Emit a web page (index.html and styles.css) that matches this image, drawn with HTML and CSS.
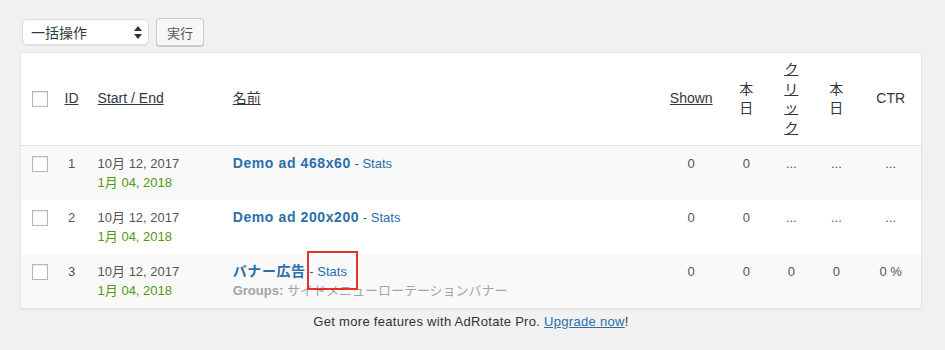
FILE: index.html
```html
<!DOCTYPE html>
<html>
<head>
    <link rel="stylesheet" href="styles.css">
</head>
<body>
    <div class="wrap">
        <div class="tablenav">
            <div class="bulk-select">
                <span>一括操作</span>
                <svg class="updown" width="8" height="13" viewBox="0 0 8 13"><path d="M4 0 L8 5 L0 5 Z M0 8 L8 8 L4 13 Z" fill="#333"/></svg>
            </div>
            <button class="button">実行</button>
        </div>

        <table class="widefat">
            <colgroup>
                <col style="width:35px">
                <col style="width:32px">
                <col style="width:137px">
                <col style="width:435px">
                <col style="width:62px">
                <col style="width:48px">
                <col style="width:42px">
                <col style="width:48px">
                <col style="width:61px">
            </colgroup>
            <thead>
                <tr>
                    <th class="check-column head-check"><span class="checkbox"></span></th>
                    <th class="center"><a href="#">ID</a></th>
                    <th class="date-col"><a href="#">Start / End</a></th>
                    <th><a href="#">名前</a></th>
                    <th class="center"><a href="#">Shown</a></th>
                    <th class="center"><span class="vert">本日</span></th>
                    <th class="center"><a href="#" class="vert">クリック</a></th>
                    <th class="center"><span class="vert">本日</span></th>
                    <th class="center">CTR</th>
                </tr>
            </thead>
            <tbody>
                <tr class="alt">
                    <td class="check-column"><span class="checkbox"></span></td>
                    <td class="center">1</td>
                    <td class="date-col">10月 12, 2017<br><span class="end-date">1月 04, 2018</span></td>
                    <td><a href="#" class="row-title">Demo ad 468x60</a> - <a href="#">Stats</a></td>
                    <td class="center">0</td>
                    <td class="center">0</td>
                    <td class="center muted">...</td>
                    <td class="center muted">...</td>
                    <td class="center muted">...</td>
                </tr>
                <tr>
                    <td class="check-column"><span class="checkbox"></span></td>
                    <td class="center">2</td>
                    <td class="date-col">10月 12, 2017<br><span class="end-date">1月 04, 2018</span></td>
                    <td><a href="#" class="row-title">Demo ad 200x200</a> - <a href="#">Stats</a></td>
                    <td class="center">0</td>
                    <td class="center">0</td>
                    <td class="center muted">...</td>
                    <td class="center muted">...</td>
                    <td class="center muted">...</td>
                </tr>
                <tr class="alt">
                    <td class="check-column"><span class="checkbox"></span></td>
                    <td class="center">3</td>
                    <td class="date-col">10月 12, 2017<br><span class="end-date">1月 04, 2018</span></td>
                    <td><a href="#" class="row-title">バナー広告</a> - <a href="#" class="highlight">Stats</a><br><span class="groups"><strong>Groups:</strong> サイドメニューローテーションバナー</span></td>
                    <td class="center">0</td>
                    <td class="center">0</td>
                    <td class="center">0</td>
                    <td class="center">0</td>
                    <td class="center">0 %</td>
                </tr>
            </tbody>
        </table>

        <p class="pro-note">Get more features with AdRotate Pro. <a href="#">Upgrade now</a>!</p>
    </div>
</body>
</html>
```

FILE: styles.css
```css
body {
    margin: 0;
    background-color: #f1f1f1;
    color: #444;
    font-family: "Liberation Sans", "Noto Sans CJK JP", sans-serif;
    font-size: 13px;
}

.wrap {
    padding: 18px 23px 0 20px;
}

.tablenav {
    display: flex;
    align-items: center;
    gap: 7px;
    height: 28px;
    margin-bottom: 6px;
    padding-left: 2px;
}

.bulk-select {
    width: 127px;
    height: 26px;
    box-sizing: border-box;
    display: flex;
    align-items: center;
    justify-content: space-between;
    padding: 0 6px 0 8px;
    background: #fff;
    border: 1px solid #ddd;
    border-radius: 5px;
    box-shadow: 0 1px 1px rgba(0, 0, 0, 0.06);
    font-size: 14px;
    color: #32373c;
}

.button {
    height: 28px;
    padding: 0 10px;
    background: #f7f7f7;
    border: 1px solid #ccc;
    border-radius: 3px;
    box-shadow: 0 1px 0 #ccc;
    font-family: inherit;
    font-size: 13px;
    color: #555;
}

.widefat {
    width: 902px;
    table-layout: fixed;
    border-collapse: collapse;
    background: #fff;
    border: 1px solid #e5e5e5;
    box-shadow: 0 1px 1px rgba(0, 0, 0, 0.04);
}

.widefat th {
    font-size: 14px;
    font-weight: normal;
    line-height: 19.5px;
    color: #32373c;
    text-align: left;
    padding: 7px 8px;
    border-bottom: 1px solid #e1e1e1;
    vertical-align: middle;
}

.widefat th a {
    color: #32373c;
    text-decoration: underline;
}

.widefat td {
    padding: 8px;
    line-height: 19px;
    color: #555;
    vertical-align: top;
    height: 38px;
    box-sizing: content-box;
}

.widefat .date-col {
    padding-left: 10px;
    padding-right: 6px;
}

.widefat tr.alt td {
    background: #f9f9f9;
}

.widefat .center {
    text-align: center;
}

.vert {
    display: inline-block;
    width: 1em;
    word-break: break-all;
}

.check-column {
    padding: 0 0 0 11px !important;
}

.widefat td.check-column {
    padding-top: 10px !important;
}

.checkbox {
    display: block;
    width: 16px;
    height: 16px;
    box-sizing: border-box;
    background: #fff;
    border: 1px solid #b4b9be;
    box-shadow: inset 0 1px 2px rgba(0, 0, 0, 0.1);
}

.end-date {
    color: #4f9a10;
}

a {
    color: #2a6fab;
    text-decoration: none;
}

.row-title {
    font-size: 14px;
    font-weight: bold;
    letter-spacing: 0.6px;
}

.highlight {
    position: relative;
}

/* red annotation box around the Stats link */
.highlight::after {
    content: "";
    position: absolute;
    left: -10px;
    right: -11px;
    top: -13px;
    bottom: -11px;
    border: 2px solid #e8302c;
}

.groups {
    color: #a0a5aa;
}

.muted {
    color: #999;
}

.pro-note {
    margin: 5px 0 0;
    text-align: center;
    color: #333;
    letter-spacing: 0.3px;
}

.pro-note a {
    text-decoration: underline;
}
```
